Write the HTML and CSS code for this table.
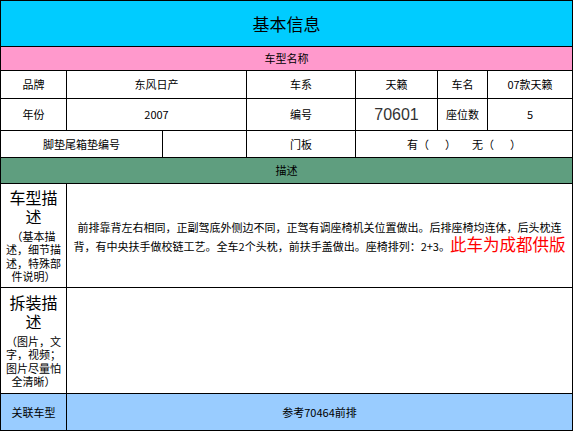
FILE: index.html
```html
<!DOCTYPE html>
<html lang="zh-CN">
<head>
<meta charset="utf-8">
<title>基本信息</title>
<link rel="stylesheet" href="styles.css">
</head>
<body>
<div class="sheet">
  <div class="cell title span-all">基本信息</div>
  <div class="cell pink span-all">车型名称</div>

  <div class="cell">品牌</div>
  <div class="cell span2">东风日产</div>
  <div class="cell">车系</div>
  <div class="cell">天籁</div>
  <div class="cell">车名</div>
  <div class="cell">07款天籁</div>

  <div class="cell">年份</div>
  <div class="cell span2">2007</div>
  <div class="cell">编号</div>
  <div class="cell num">70601</div>
  <div class="cell">座位数</div>
  <div class="cell">5</div>

  <div class="cell span2">脚垫尾箱垫编号</div>
  <div class="cell"></div>
  <div class="cell">门板</div>
  <div class="cell span3">有（<span class="sp"></span>）<span class="sp"></span>无（<span class="sp"></span>）</div>

  <div class="cell green span-all">描述</div>

  <div class="cell lbl">
    <div class="big">车型描<br>述</div>
    <div class="small">（基本描<br>述，细节描<br>述，特殊部<br>件说明）</div>
  </div>
  <div class="cell span6 desc">前排靠背左右相同，正副驾底外侧边不同，正驾有调座椅机关位置做出。后排座椅均连体，后头枕连<br>背，有中央扶手做校链工艺。全车2个头枕，前扶手盖做出。座椅排列：2+3。<span class="red">此车为成都供版</span></div>

  <div class="cell lbl">
    <div class="big">拆装描<br>述</div>
    <div class="small">（图片，文<br>字，视频；<br>图片尽量怕<br>全清晰）</div>
  </div>
  <div class="cell span6"></div>

  <div class="cell blue">关联车型</div>
  <div class="cell blue span6">参考70464前排</div>
</div>
</body>
</html>
```

FILE: styles.css
```css
html, body {
  margin: 0;
  padding: 0;
  background: #ffffff;
}

body {
  font-family: "Noto Sans CJK SC", "Noto Sans", sans-serif;
  font-size: 11px;
  color: #000;
}

.sheet {
  display: grid;
  width: max-content;
  grid-template-columns: 65px 95px 83px 108px 81px 49px 84px;
  grid-template-rows: 45px 23px 27px 31px 26px 25px 103px 105px 36px;
  gap: 1px;
  padding: 1px;
  background: #000;
}

.cell {
  background: #fff;
  display: flex;
  align-items: center;
  justify-content: center;
  text-align: center;
  line-height: 13px;
  white-space: nowrap;
}

.span-all { grid-column: 1 / -1; }
.span2 { grid-column: span 2; }
.span3 { grid-column: span 3; }
.span6 { grid-column: span 6; }

.title {
  background: #00ccff;
  font-size: 17px;
}

.pink { background: #ff99cc; }
.green { background: #5f9e7f; }
.blue { background: #99ccff; }

.num {
  font-family: "Liberation Sans", Arial, sans-serif;
  font-size: 16px;
  color: #333;
}

.sp {
  display: inline-block;
  width: 16px;
}

.lbl {
  flex-direction: column;
}

.big {
  font-size: 16px;
  line-height: 19px;
}

.small {
  margin-top: 4px;
  line-height: 13.5px;
}

.desc {
  line-height: 17px;
  display: block;
  padding-top: 35px;
}

.red {
  color: #ff0000;
  font-size: 16.5px;
}
```
